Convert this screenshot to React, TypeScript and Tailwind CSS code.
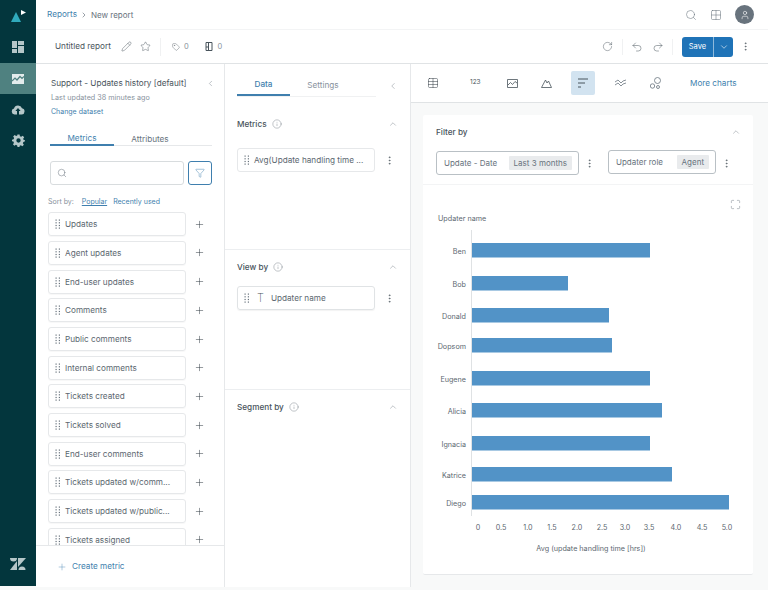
import React from "react";
import {
  ChevronDown,
  ChevronLeft,
  ChevronRight,
  ChevronUp,
  Filter,
  Grid2x2,
  Info,
  Maximize,
  MoreVertical,
  Pencil,
  Plus,
  Redo2,
  RotateCw,
  Search,
  Star,
  Table,
  Tag,
  Undo2,
  User,
} from "lucide-react";

const metrics = [
  "Updates",
  "Agent updates",
  "End-user updates",
  "Comments",
  "Public comments",
  "Internal comments",
  "Tickets created",
  "Tickets solved",
  "End-user comments",
  "Tickets updated w/comm...",
  "Tickets updated w/public...",
  "Tickets assigned",
];

const bars = [
  { name: "Ben", y: 13, end: 650 },
  { name: "Bob", y: 46, end: 568 },
  { name: "Donald", y: 78, end: 609 },
  { name: "Dopsom", y: 108, end: 612 },
  { name: "Eugene", y: 141, end: 650 },
  { name: "Alicia", y: 173, end: 662 },
  { name: "Ignacia", y: 206, end: 650 },
  { name: "Katrice", y: 237, end: 672 },
  { name: "Diego", y: 265, end: 729 },
];

const ticks = [
  ["0", 478],
  ["0.5", 501],
  ["1.0", 528],
  ["1.5", 552],
  ["2.0", 577],
  ["2.5", 602],
  ["3.0", 625],
  ["3.5", 649],
  ["4.0", 676],
  ["4.5", 702],
  ["5.0", 727],
] as const;

const Grip = () => (
  <svg width="6" height="10" viewBox="0 0 6 10" fill="#68737d" className="shrink-0">
    {[1, 3.7, 6.4, 9].map((y) => (
      <g key={y}>
        <rect x="0.5" y={y - 0.5} width="1.2" height="1.2" />
        <rect x="3.8" y={y - 0.5} width="1.2" height="1.2" />
      </g>
    ))}
  </svg>
);

const Rail = () => (
  <div className="w-[36px] h-[586px] bg-[#03363d] flex flex-col shrink-0">
    <div className="h-[31px] flex items-center justify-center">
      <svg width="16" height="14" viewBox="0 0 16 14">
        <path d="M6 3 L11 13 L1 13 Z" fill="#30aabc" />
        <path d="M11 1 L16 3.5 L11 6 Z" fill="#ffffff" />
      </svg>
    </div>
    <div className="h-[32px] flex items-center justify-center">
      <svg width="12" height="12" viewBox="0 0 12 12" fill="#b5c7c9">
        <rect x="0" y="0" width="5" height="7" />
        <rect x="0" y="8" width="5" height="4" />
        <rect x="6" y="0" width="6" height="4" />
        <rect x="6" y="5" width="6" height="7" />
      </svg>
    </div>
    <div className="h-[31px] flex items-center justify-center bg-[#4f8180]">
      <svg width="12" height="10" viewBox="0 0 12 10">
        <path d="M0 0 H12 V10 H0 Z" fill="#e3ecec" />
        <path d="M0 7 L3 4 L5 6 L8 2.5 L10 4.5 L12 2.5" fill="none" stroke="#4f8180" strokeWidth="1.2" />
      </svg>
    </div>
    <div className="h-[31px] flex items-center justify-center">
      <svg width="14" height="11" viewBox="0 0 14 11" fill="#b5c7c9">
        <path d="M3.5 10.5 A3 3 0 0 1 3 4.6 A4.2 4.2 0 0 1 11 4.2 A3.2 3.2 0 0 1 10.8 10.5 H8 V7 H9.6 L7 4 L4.4 7 H6 V10.5 Z" />
      </svg>
    </div>
    <div className="h-[31px] flex items-center justify-center">
      <svg width="13" height="13" viewBox="0 0 24 24" fill="#b5c7c9">
        <path
          fillRule="evenodd"
          d="M10 1 H14 L14.6 4.2 L17 5.2 L19.7 3.3 L22.5 6.1 L20.6 8.8 L21.6 11 L24 11.5 V13.5 L21 14.6 L20 17 L21.9 19.7 L19.1 22.5 L16.4 20.6 L14.2 21.6 L13.8 24 H10.2 L9.6 21 L7.2 20 L4.5 21.9 L1.7 19.1 L3.6 16.4 L2.6 14 L0 13.5 V10.5 L3 9.6 L4 7.2 L2.1 4.5 L4.9 1.7 L7.6 3.6 L9.8 2.6 Z M12 8 A4 4 0 1 0 12 16 A4 4 0 1 0 12 8 Z"
        />
      </svg>
    </div>
    <div className="mt-auto h-[28px] flex items-start justify-center">
      <svg width="16" height="12" viewBox="0 0 16 12" fill="#b5c7c9">
        <path d="M7 3 V12 H0 Z" />
        <path d="M0 0 H7 A3.5 3.5 0 0 1 0 0 Z" />
        <path d="M8 0 H16 L8 9 Z" />
        <path d="M8.5 12 A3.5 3.5 0 0 1 15.5 12 Z" />
      </svg>
    </div>
  </div>
);

const TopBars = () => (
  <>
    <div className="h-[30px] flex items-center pl-[11px] pr-[14px] border-b border-[#f3f4f5] shrink-0">
      <span className="text-[#3f7fae] text-[8.2px]">Reports</span>
      <ChevronRight size={8} className="mx-[3px] text-[#68737d]" />
      <span className="text-[#68737d] text-[8px]">New report</span>
      <Search size={12} strokeWidth={1.1} className="ml-auto text-[#68737d]" />
      <Grid2x2 size={12} strokeWidth={1.1} className="ml-[13px] text-[#68737d]" />
      <div className="ml-[13px] w-[19px] h-[19px] rounded-full bg-[#68737d] flex items-center justify-center">
        <User size={10} strokeWidth={1.4} className="text-white" />
      </div>
    </div>
    <div className="h-[34px] flex items-center pl-[19px] pr-[17px] border-b border-[#e0e3e5] shrink-0">
      <span className="text-[#49545c] text-[8.2px]">Untitled report</span>
      <Pencil size={11} strokeWidth={1} className="ml-[10px] text-[#49545c]" />
      <Star size={11} strokeWidth={1} className="ml-[8px] text-[#49545c]" />
      <div className="ml-[9px] w-px h-[18px] bg-[#f0f1f2]" />
      <Tag size={8} strokeWidth={1.2} className="ml-[11px] text-[#49545c]" />
      <span className="ml-[4px] text-[#87929d] text-[7.5px]">0</span>
      <svg width="8" height="9" viewBox="0 0 8 9" className="ml-[16px]" fill="none" stroke="#49545c" strokeWidth="1">
        <path d="M1 0.5 H7 V8.5 H1 Z M3.5 0.5 V5 H1 M3.5 5 V8.5" />
      </svg>
      <span className="ml-[5px] text-[#87929d] text-[7.5px]">0</span>
      <RotateCw size={11} strokeWidth={1} className="ml-auto text-[#49545c]" />
      <div className="ml-[9px] w-px h-[16px] bg-[#f0f1f2]" />
      <Undo2 size={12} strokeWidth={1} className="ml-[8px] text-[#49545c]" />
      <Redo2 size={12} strokeWidth={1} className="ml-[9px] text-[#49545c]" />
      <div className="ml-[8px] w-px h-[16px] bg-[#f0f1f2]" />
      <div className="ml-[9px] h-[20px] w-[51px] rounded-[3px] bg-[#1f73b7] flex text-white">
        <span className="w-[32px] flex items-center justify-center text-[7.5px] border-r border-[#8fb9db]">Save</span>
        <span className="flex-1 flex items-center justify-center">
          <ChevronDown size={10} strokeWidth={1.4} />
        </span>
      </div>
      <MoreVertical size={11} strokeWidth={1.4} className="ml-[7px] text-[#49545c]" />
    </div>
  </>
);

const LeftPanel = () => (
  <div className="w-[189px] border-r border-[#e6e8ea] bg-white flex flex-col shrink-0 h-[523px]">
    <div className="flex-1 min-h-0 overflow-hidden flex flex-col">
      <div className="pl-[15px] pr-[9px] pt-[13px] flex items-center justify-between">
        <span className="text-[#49545c] text-[8.2px] leading-[12px]">Support - Updates history [default]</span>
        <ChevronLeft size={9} strokeWidth={1.1} className="text-[#68737d]" />
      </div>
      <div className="pl-[15px] mt-[4px] text-[#87929d] text-[7.2px] leading-[10px]">Last updated 38 minutes ago</div>
      <div className="pl-[15px] mt-[4px] text-[#3f7fae] text-[7px] leading-[10px]">Change dataset</div>
      <div className="ml-[14px] mr-[12px] mt-[15px] flex border-b border-[#e6e8ea] h-[25px]">
        <span className="w-[64px] flex items-center justify-center text-[#3f7fae] text-[8.2px] border-b-2 border-[#3f7fae] -mb-px">Metrics</span>
        <span className="w-[72px] flex items-center justify-center text-[#68737d] text-[8.2px]">Attributes</span>
      </div>
      <div className="ml-[14px] mt-[15px] flex items-center">
        <div className="w-[134px] h-[24px] border border-[#d8dcde] rounded-[3px] flex items-center pl-[6px]">
          <Search size={10} strokeWidth={1.2} className="text-[#68737d]" />
        </div>
        <div className="ml-[4px] w-[24px] h-[24px] border border-[#3f7fae] rounded-[3px] flex items-center justify-center">
          <Filter size={10} strokeWidth={1.1} className="text-[#3f7fae]" />
        </div>
      </div>
      <div className="pl-[12px] mt-[12px] flex items-center text-[7px] leading-[10px]">
        <span className="text-[#87929d]">Sort by:</span>
        <span className="ml-[8px] text-[#3f7fae] underline">Popular</span>
        <span className="ml-[6px] text-[#3f7fae]">Recently used</span>
      </div>
      <div className="pl-[12px] mt-[5px] flex flex-col gap-[4.7px]">
        {metrics.map((name) => (
          <div key={name} className="flex items-center">
            <div className="w-[138px] h-[24px] shrink-0 border border-[#e6e8ea] rounded-[3px] flex items-center pl-[6px] shadow-[0_1px_1px_rgba(0,0,0,0.03)]">
              <Grip />
              <span className="ml-[4px] text-[#5c6770] text-[8.2px] whitespace-nowrap">{name}</span>
            </div>
            <Plus size={11} strokeWidth={1.1} className="ml-[8px] text-[#2f3941]" />
          </div>
        ))}
      </div>
    </div>
    <div className="h-[42px] border-t border-[#e6e8ea] flex items-center pl-[21px] shrink-0">
      <Plus size={10} strokeWidth={1} className="text-[#3f7fae]" />
      <span className="ml-[5px] text-[#3f7fae] text-[8.2px]">Create metric</span>
    </div>
  </div>
);

const SectionHead = ({ title, className }: { title: string; className: string }) => (
  <div className={`flex items-center pr-[12px] ${className}`}>
    <span className="text-[#49545c] text-[8.2px] font-medium leading-[12px]">{title}</span>
    <Info size={10} strokeWidth={1} className="ml-[5px] text-[#68737d]" />
    <ChevronUp size={10} strokeWidth={1} className="ml-auto text-[#68737d]" />
  </div>
);

const MiddlePanel = () => (
  <div className="w-[186px] h-[523px] border-r border-[#e6e8ea] bg-white flex flex-col shrink-0">
    <div className="h-[186px] border-b border-[#eceef0] shrink-0">
      <div className="ml-[12px] mr-[12px] mt-[11px] flex items-center">
        <div className="flex w-[139px] h-[22px] border-b border-[#f0f1f2]">
          <span className="w-[53px] flex items-center justify-center text-[#3f7fae] text-[8.2px] font-medium border-b-2 border-[#3f7fae]">Data</span>
          <span className="w-[66px] flex items-center justify-center text-[#87929d] text-[8.2px]">Settings</span>
        </div>
        <ChevronLeft size={10} strokeWidth={1} className="ml-auto text-[#68737d]" />
      </div>
      <SectionHead title="Metrics" className="pl-[12px] mt-[21px]" />
      <div className="ml-[12px] mt-[18px] flex items-center">
        <div className="w-[138px] h-[24px] border border-[#e6e8ea] rounded-[3px] flex items-center pl-[6px]">
          <Grip />
          <span className="ml-[4px] text-[#5c6770] text-[8.2px] whitespace-nowrap">Avg(Update handling time ...</span>
        </div>
        <MoreVertical size={11} strokeWidth={1.4} className="ml-[9px] text-[#49545c]" />
      </div>
    </div>
    <div className="h-[140px] border-b border-[#eceef0] shrink-0 pl-[12px]">
      <SectionHead title="View by" className="mt-[11px]" />
      <div className="mt-[13px] flex items-center">
        <div className="w-[138px] h-[24px] border border-[#e0e3e5] rounded-[3px] flex items-center pl-[6px] shadow-[0_1px_1px_rgba(0,0,0,0.05)]">
          <Grip />
          <span className="ml-[7px] text-[#49545c] text-[11px] font-extralight leading-none">T</span>
          <span className="ml-[7px] text-[#5c6770] text-[8.2px]">Updater name</span>
        </div>
        <MoreVertical size={11} strokeWidth={1.4} className="ml-[9px] text-[#49545c]" />
      </div>
    </div>
    <div className="pl-[12px]">
      <SectionHead title="Segment by" className="mt-[11px]" />
    </div>
  </div>
);

const FilterChip = ({ label, value, w }: { label: string; value: string; w: string }) => (
  <div className={`${w} h-[24px] border border-[#b9c0c5] rounded-[3px] flex items-center pl-[7px] pr-[6px] justify-between`}>
    <span className="text-[#68737d] text-[8px] whitespace-nowrap">{label}</span>
    <span className="bg-[#e9ebed] text-[#68737d] text-[8px] px-[5px] h-[14px] flex items-center rounded-[1px] whitespace-nowrap">{value}</span>
  </div>
);

const Chart = () => (
  <svg width="330" height="329" viewBox="423 230 330 329" className="block">
    <line x1="471.5" y1="230" x2="471.5" y2="516" stroke="#dfe2e4" />
    {bars.map((b) => (
      <g key={b.name}>
        <rect x="472" y={230 + b.y} width={b.end - 472} height="14.5" fill="#5293c7" />
        <text x="466" y={230 + b.y + 11} textAnchor="end" fontSize="7.2" fill="#5c6770" fontFamily="Inter, sans-serif">
          {b.name}
        </text>
      </g>
    ))}
    {ticks.map(([t, x]) => (
      <text key={t} x={x} y="530" textAnchor="middle" fontSize="7.2" fill="#5c6770" fontFamily="Inter, sans-serif">
        {t}
      </text>
    ))}
    <text x="591" y="551" textAnchor="middle" fontSize="7.2" fill="#5c6770" fontFamily="Inter, sans-serif">
      Avg (update handling time [hrs])
    </text>
  </svg>
);

const ChartArea = () => (
  <div className="flex-1 h-[523px] flex flex-col min-w-0">
    <div className="h-[39px] bg-white border-b border-[#e0e3e5] flex items-center shrink-0 pl-[16px]">
      <Table size={12} strokeWidth={1} className="text-[#2f3941]" />
      <span className="ml-[31px] text-[#49545c] text-[6.5px] w-[12px]">123</span>
      <svg width="11" height="9" viewBox="0 0 11 9" fill="none" stroke="#49545c" strokeWidth="0.8" className="ml-[25px]">
        <path d="M0.5 0.5 H10.5 V8.5 H0.5 Z M1 6 L3.5 3.5 L5.5 5.5 L8 2.5 L10 4" />
      </svg>
      <svg width="11" height="9" viewBox="0 0 11 9" fill="none" stroke="#49545c" strokeWidth="0.8" className="ml-[23px]">
        <path d="M0.5 8.5 H10.5 L7.5 2 L6 4 L4.5 1 Z" />
      </svg>
      <div className="ml-[19px] w-[24px] h-[24px] rounded-[2px] bg-[#d2e3f0] flex items-center justify-center">
        <svg width="12" height="10" viewBox="0 0 12 10" stroke="#49545c" strokeWidth="1">
          <path d="M1 1 H11 M1 5 H8 M1 9 H4" />
        </svg>
      </div>
      <svg width="11" height="9" viewBox="0 0 11 9" fill="none" stroke="#68737d" strokeWidth="0.8" className="ml-[20px]">
        <path d="M0 3 L3 1 L6 4 L8 2 L11 1 M0 6 L3 4 L6 7 L8 5 L11 4" />
      </svg>
      <svg width="11" height="12" viewBox="0 0 11 12" fill="none" stroke="#68737d" strokeWidth="0.8" className="ml-[24px]">
        <circle cx="7.5" cy="3.5" r="3" />
        <circle cx="2.5" cy="9" r="2.2" />
        <circle cx="8" cy="10" r="1.5" />
      </svg>
      <span className="ml-[29px] text-[#3f7fae] text-[8.2px]">More charts</span>
    </div>
    <div className="flex-1 min-h-0 bg-[#f8f9f9] pt-[12px] pl-[12px]">
      <div className="w-[330px] h-[460px] bg-white rounded-[2px] border-b border-[#e6e8ea] flex flex-col">
        <div className="pl-[13px] pr-[12px] h-[70px] border-b border-[#f3f4f5] shrink-0">
          <div className="flex items-center justify-between pt-[11px]">
            <span className="text-[#49545c] text-[8.2px] font-medium leading-[12px]">Filter by</span>
            <ChevronUp size={10} strokeWidth={1} className="text-[#68737d]" />
          </div>
          <div className="flex items-center mt-[13px]">
            <FilterChip label="Update - Date" value="Last 3 months" w="w-[143px]" />
            <MoreVertical size={11} strokeWidth={1.4} className="ml-[5px] text-[#49545c]" />
            <div className="ml-[13px] -mt-[2px]">
              <FilterChip label="Updater role" value="Agent" w="w-[108px]" />
            </div>
            <MoreVertical size={11} strokeWidth={1.4} className="ml-[5px] text-[#49545c]" />
          </div>
        </div>
        <div className="h-[45px] pl-[15px] pr-[12px] shrink-0">
          <div className="flex justify-end pt-[14px]">
            <Maximize size={11} strokeWidth={1} className="text-[#68737d]" />
          </div>
          <div className="text-[#5c6770] text-[7.2px] leading-[10px] mt-[4px]">Updater name</div>
        </div>
        <Chart />
      </div>
    </div>
  </div>
);

export default function App() {
  return (
    <div className="w-[768px] h-[590px] bg-[#f8f9f9] flex overflow-hidden font-['Inter',sans-serif]">
      <Rail />
      <div className="flex-1 h-[586px] flex flex-col min-w-0 bg-white">
        <TopBars />
        <div className="flex flex-1 min-h-0">
          <LeftPanel />
          <MiddlePanel />
          <ChartArea />
        </div>
      </div>
    </div>
  );
}
